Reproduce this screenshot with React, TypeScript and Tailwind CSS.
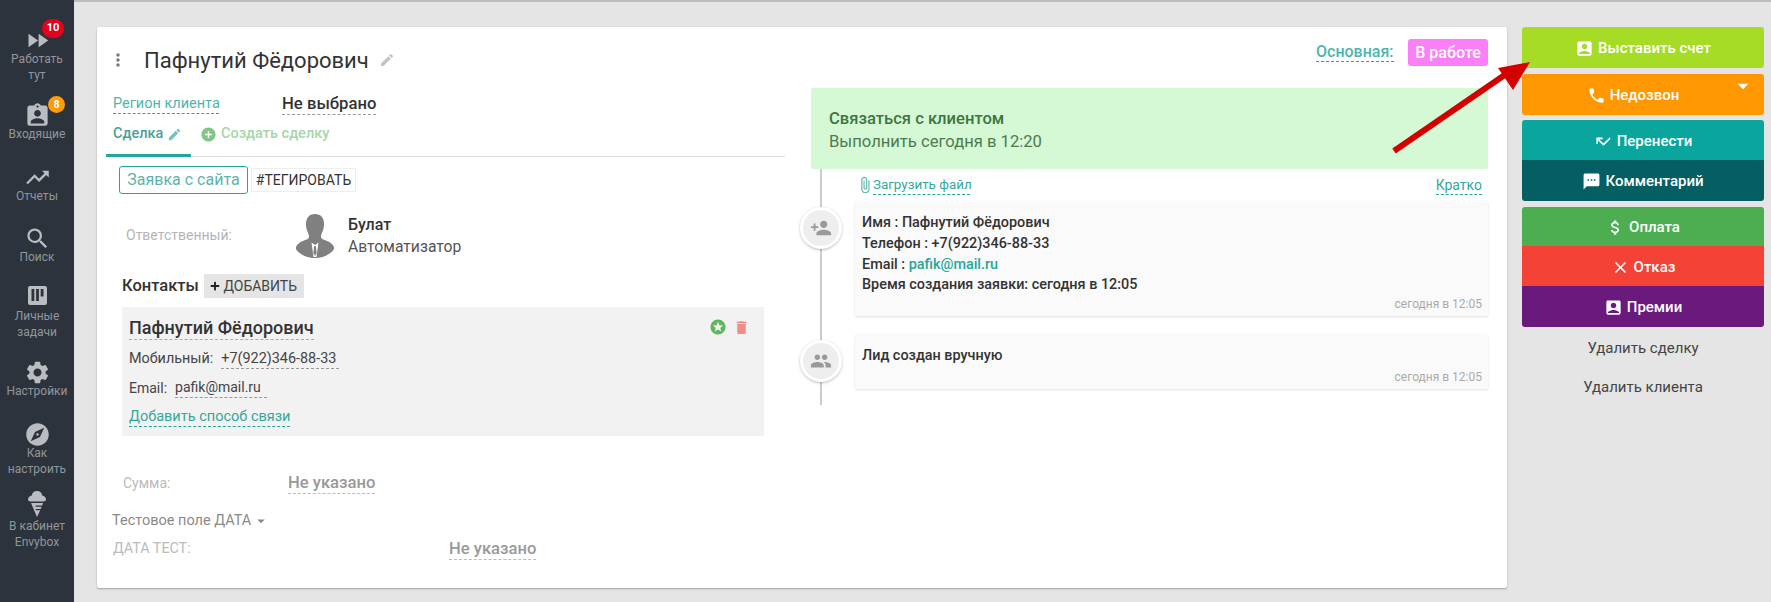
import type { ReactNode } from 'react';
import { FaPlus } from 'react-icons/fa';
import {
  MdFastForward,
  MdAssignmentInd,
  MdTrendingUp,
  MdSearch,
  MdSettings,
  MdExplore,
  MdMoreVert,
  MdEdit,
  MdAddCircle,
  MdStars,
  MdDelete,
  MdArrowDropDown,
  MdAttachFile,
  MdPersonAdd,
  MdPeople,
  MdAccountBox,
  MdPhone,
  MdCallMissed,
  MdSms,
  MdAttachMoney,
  MdClose,
} from 'react-icons/md';

function IceCream() {
  return (
    <svg width="18" height="26" viewBox="0 0 18 26" fill="#b9bdc2">
      <path d="M9 0c3 0 5 2 5.200 4.500C16.500 5 18 6.500 18 8.200 18 9.500 16.800 10.500 15.500 10.500h-13C1.200 10.500 0 9.500 0 8.200 0 6.500 1.500 5 3.800 4.500 4 2 6 0 9 0z" />
      <path d="M3 12h12l-.8 2.400H7.500v1.400h6l-.7 2.200H7.800v1.300h4.400L9 26 3 12z" />
    </svg>
  );
}

// board icon for "Личные задачи"
function Board() {
  return (
    <svg width="19" height="19" viewBox="0 0 19 19" fill="#b9bdc2">
      <path d="M2 0h15a2 2 0 0 1 2 2v15a2 2 0 0 1-2 2H2a2 2 0 0 1-2-2V2a2 2 0 0 1 2-2z" />
      <rect x="3.500" y="3" width="2.800" height="12" fill="#2c333c" />
      <rect x="8.100" y="3" width="2.800" height="12" fill="#2c333c" />
      <rect x="12.700" y="3" width="2.800" height="7.500" fill="#2c333c" />
    </svg>
  );
}

function Avatar() {
  return (
    <svg width="38" height="44" viewBox="0 0 38 44" fill="#808080">
      <path d="M19 0c6 0 9 4 9 10 0 3-.6 5.500-1.500 7.500-.8 2-1.500 3.500-1.500 5 0 1.500 1 2.500 3 3.300 4 1.500 8 3 10 7.200 .7 1.500 -.5 3-2 4.500C32 41.500 26 44 19 44S6 41.500 1.900 37.500C.4 36 -.7 34.500 0 33c2-4.200 6-5.700 10-7.200 2-.8 3-1.800 3-3.300 0-1.500-.7-3-1.500-5C10.600 15.500 10 13 10 10 10 4 13 0 19 0z" />
      <path d="M15.500 28.500L19 31l3.500-2.500L20.500 43h-3z" fill="#fff" />
      <path d="M18.200 32h1.600l.9 7-1.700 3-1.700-3z" />
    </svg>
  );
}

const navItems: { lines: string[]; icon: ReactNode; h: number; gap?: number; badge?: ReactNode }[] = [
  {
    lines: ['Работать', 'тут'],
    icon: <MdFastForward size={27} />,
    h: 75,
    badge: (
      <span className="absolute left-[42px] top-[-10px] flex h-[19px] w-[22px] items-center justify-center rounded-full bg-[#e6001f] text-[11px] font-bold text-white">
        10
      </span>
    ),
  },
  {
    lines: ['Входящие'],
    icon: <MdAssignmentInd size={27} />,
    h: 62,
    badge: (
      <span className="absolute left-[48px] top-[-8px] flex h-[17px] w-[17px] items-center justify-center rounded-full bg-[#ff9c08] text-[10px] font-bold text-white">
        8
      </span>
    ),
  },
  { lines: ['Отчеты'], icon: <MdTrendingUp size={27} />, h: 61 },
  { lines: ['Поиск'], icon: <MdSearch size={27} />, h: 57 },
  { lines: ['Личные', 'задачи'], icon: <Board />, h: 77, gap: 2 },
  { lines: ['Настройки'], icon: <MdSettings size={27} />, h: 62 },
  { lines: ['Как', 'настроить'], icon: <MdExplore size={27} />, h: 70 },
  { lines: ['В кабинет', 'Envybox'], icon: <IceCream />, h: 70, gap: 3 },
];

function Sidebar() {
  return (
    <div className="flex h-full w-[74px] shrink-0 flex-col bg-[#2c333c] pt-[29px] text-[#92969b]">
      {navItems.map((item) => (
        <div key={item.lines[0]} className="relative flex flex-col items-center" style={{ height: item.h }}>
          <div className="relative flex h-[22px] w-[74px] items-center justify-center text-[#b9bdc2]">
            {item.icon}
            {item.badge}
          </div>
          <div className="text-center text-[12px] leading-[16px]" style={{ marginTop: item.gap ?? 0 }}>
            {item.lines.map((l) => (
              <div key={l}>{l}</div>
            ))}
          </div>
        </div>
      ))}
    </div>
  );
}

function Dashed({ children, className = '' }: { children: ReactNode; className?: string }) {
  return <span className={`inline-block border-b border-dashed ${className}`}>{children}</span>;
}

function LeftColumn() {
  return (
    <div className="w-[688px] shrink-0 pl-[9px] pt-[11px]">
      <div className="flex h-[44px] items-center">
        <MdMoreVert size={20} className="ml-[2px] text-[#777]" />
        <span className="ml-[16px] text-[22px] text-[#333]">Пафнутий Фёдорович</span>
        <MdEdit size={16} className="ml-[10px] text-[#c4c4c4]" />
      </div>
      <div className="mt-[10px] flex h-[24px] items-center pl-[7px]">
        <Dashed className="w-[106px] whitespace-nowrap border-[#26a69a] text-[14.5px] leading-[18px] text-[#4db6ac]">Регион клиента</Dashed>
        <Dashed className="ml-[63px] border-[#999] text-[16.7px] leading-[20px] font-medium text-[#333]">Не выбрано</Dashed>
      </div>
      <div className="flex h-[41px] border-b border-[#ddd]">
        <div className="flex h-[41px] w-[85px] items-center border-b-[3px] border-[#26a69a] pb-[2px] pl-[7px] text-[14.5px] font-medium text-[#4b9f98]">
          Сделка
          <MdEdit size={15} className="ml-[4px] text-[#6fc4bc]" />
        </div>
        <div className="ml-[9px] flex items-center pb-[4px] text-[14.5px] font-medium text-[#a5d6a7]">
          <MdAddCircle size={17} className="mr-[4px] text-[#81c784]" />
          Создать сделку
        </div>
      </div>
      <div className="mt-[9px] flex items-center pl-[13px]">
        <span className="flex h-[28px] w-[129px] items-center justify-center rounded-[3px] border border-[#26a69a] text-[16px] text-[#5fb3ab]">
          Заявка с сайта
        </span>
        <span className="ml-[3px] flex h-[24px] w-[105px] items-center justify-center border border-[#eee] text-[14px] text-[#333]">
          #ТЕГИРОВАТЬ
        </span>
      </div>
      <div className="mt-[20px] flex h-[43px] items-center pl-[20px]">
        <span className="w-[170px] text-[14px] text-[#b5b5b5]">Ответственный:</span>
        <Avatar />
        <div className="ml-[14px]">
          <div className="text-[16px] leading-[20px] font-medium text-[#333]">Булат</div>
          <div className="mt-[2px] text-[15.7px] leading-[20px] text-[#555]">Автоматизатор</div>
        </div>
      </div>
      <div className="mt-[17px] flex h-[24px] items-center pl-[16px]">
        <span className="text-[16.5px] font-medium text-[#333]">Контакты</span>
        <span className="ml-[5px] flex h-[24px] w-[100px] items-center justify-center gap-[3px] bg-[#e5e5e5] text-[14px] text-[#444]">
          <FaPlus size={10} className="text-[#222]" />
          ДОБАВИТЬ
        </span>
      </div>
      <div className="relative ml-[16px] mt-[9px] h-[129px] w-[642px] bg-[#f2f2f2] px-[7px] pt-[9px]">
        <div className="absolute right-[14px] top-[11px] flex items-center gap-[6px]">
          <MdStars size={18} className="text-[#5cb85c]" />
          <MdDelete size={17} className="text-[#ef8e88]" />
        </div>
        <Dashed className="border-[#aaa] text-[18px] leading-[23px] font-medium text-[#333]">Пафнутий Фёдорович</Dashed>
        <div className="mt-[8px] flex text-[14.4px] leading-[20px] text-[#444]">
          Мобильный:
          <Dashed className="ml-[8px] w-[118px] border-[#999] leading-[19px]">+7(922)346-88-33</Dashed>
        </div>
        <div className="mt-[9px] flex text-[14px] leading-[20px] text-[#444]">
          Email:
          <Dashed className="ml-[8px] w-[92px] border-[#999] leading-[19px]">pafik@mail.ru</Dashed>
        </div>
        <Dashed className="mt-[9px] border-[#26a69a] text-[14.5px] leading-[19px] text-[#35a79c]">Добавить способ связи</Dashed>
      </div>
      <div className="mt-[35px] flex h-[24px] items-center pl-[17px]">
        <span className="w-[165px] text-[14px] text-[#bbb]">Сумма:</span>
        <Dashed className="border-[#bbb] text-[16.6px] leading-[21px] font-medium text-[#999]">Не указано</Dashed>
      </div>
      <div className="mt-[16px] flex h-[20px] items-center pl-[6px] text-[14.5px] text-[#8a8a8a]">
        Тестовое поле ДАТА
        <MdArrowDropDown size={18} className="ml-[1px]" />
      </div>
      <div className="mt-[6px] flex h-[24px] items-center pl-[7px]">
        <span className="w-[336px] text-[14.3px] text-[#bbb]">ДАТА ТЕСТ:</span>
        <Dashed className="border-[#bbb] text-[16.6px] leading-[21px] font-medium text-[#999]">Не указано</Dashed>
      </div>
    </div>
  );
}

function TimelineCard({ icon, children, time, h }: { icon: ReactNode; children: ReactNode; time: string; h: number }) {
  return (
    <div
      className="relative ml-[44px] bg-[#fafafa] px-[7px] pt-[11px] text-[14.4px] font-medium text-[#333] shadow-[0_1px_2px_rgba(0,0,0,0.12)]"
      style={{ height: h }}
    >
      <div className="absolute left-[-55px] top-[6px] flex h-[42px] w-[42px] items-center justify-center rounded-full border-[3px] border-white bg-[#eee] text-[#999] shadow-[0_1px_3px_rgba(0,0,0,0.25)]">
        {icon}
      </div>
      {children}
      <div className="absolute bottom-[3px] right-[6px] text-[12px] font-normal text-[#aaa]">{time}</div>
    </div>
  );
}

function RightColumn() {
  return (
    <div className="w-[703px] shrink-0 pl-[26px] pt-[12px]">
      <div className="flex h-[27px] items-start justify-end">
        <Dashed className="mt-[3px] w-[78px] border-[#26a69a] text-[16px] leading-[19px] font-medium text-[#4db6ac]">Основная:</Dashed>
        <span className="ml-[14px] flex h-[27px] w-[80px] items-center justify-center rounded-[3px] bg-[#fb7ff6] text-[16px] font-medium text-white">
          В работе
        </span>
      </div>
      <div className="mt-[22px] h-[81px] rounded-[2px] bg-[#d4f9d4] pl-[18px] pt-[19px]">
        <div className="text-[16.6px] leading-[24px] font-medium text-[#3f7540]">Связаться с клиентом</div>
        <div className="text-[16.6px] leading-[21px] text-[#4f7a50]">Выполнить сегодня в 12:20</div>
      </div>
      <div className="relative pb-[16px]">
        <div className="absolute bottom-0 left-[9px] top-0 w-[2px] bg-[#ccc]" />
        <div className="ml-[44px] flex h-[32px] items-center justify-between pl-[1px] pr-[6px] text-[14px] text-[#35a79c]">
          <span className="flex items-center">
            <MdAttachFile size={18} className="mr-[-1px] text-[#5fb3ab]" />
            <Dashed className="mt-[1px] w-[97px] whitespace-nowrap border-[#26a69a] text-[13.4px] leading-[18px]">Загрузить файл</Dashed>
          </span>
          <Dashed className="mt-[1px] border-[#26a69a] leading-[18px]">Кратко</Dashed>
        </div>
        <TimelineCard icon={<MdPersonAdd size={22} />} time="сегодня в 12:05" h={115}>
          <div className="leading-[21px]">Имя : Пафнутий Фёдорович</div>
          <div className="leading-[21px]">Телефон : +7(922)346-88-33</div>
          <div className="leading-[21px]">
            Email : <span className="text-[#26a69a]">pafik@mail.ru</span>
          </div>
          <div className="leading-[19px]">Время создания заявки: сегодня в 12:05</div>
        </TimelineCard>
        <div className="h-[18px]" />
        <TimelineCard icon={<MdPeople size={22} />} time="сегодня в 12:05" h={55}>
          <div className="leading-[21px]">Лид создан вручную</div>
        </TimelineCard>
      </div>
    </div>
  );
}

function Action({ bg, h, icon, label, extra }: { bg: string; h: string; icon: ReactNode; label: string; extra?: ReactNode }) {
  return (
    <div className={`relative flex items-center justify-center pt-[2px] text-[15px] font-medium text-white ${bg} ${h}`}>
      {icon}
      <span className="ml-[4px]">{label}</span>
      {extra}
    </div>
  );
}

function ActionPanel() {
  return (
    <div className="ml-[15px] flex w-[242px] shrink-0 flex-col">
      <Action bg="bg-[#a6dc25] rounded-[3px]" h="h-[41px]" icon={<MdAccountBox size={19} />} label="Выставить счет" />
      <Action
        bg="bg-[#ff9800] rounded-[3px] mt-[6px] pr-[20px]"
        h="h-[41px]"
        icon={<MdPhone size={19} />}
        label="Недозвон"
        extra={<MdArrowDropDown size={26} className="absolute right-[8px] top-[-1px]" />}
      />
      <div className="mt-[5px] overflow-hidden rounded-[3px]">
        <Action bg="bg-[#0aa69d]" h="h-[40px]" icon={<MdCallMissed size={19} />} label="Перенести" />
        <Action bg="bg-[#055f62]" h="h-[41px]" icon={<MdSms size={19} />} label="Комментарий" />
      </div>
      <div className="mt-[6px] overflow-hidden rounded-[3px]">
        <Action bg="bg-[#4cae50]" h="h-[39px]" icon={<MdAttachMoney size={19} />} label="Оплата" />
        <Action bg="bg-[#f44336]" h="h-[40px]" icon={<MdClose size={19} />} label="Отказ" />
        <Action bg="bg-[#6a1a7d]" h="h-[41px]" icon={<MdAccountBox size={19} />} label="Премии" />
      </div>
      <div className="mt-[9px] text-center text-[15px] leading-[24px] text-[#444]">Удалить сделку</div>
      <div className="mt-[15px] text-center text-[15px] leading-[24px] text-[#444]">Удалить клиента</div>
    </div>
  );
}

export default function App() {
  return (
    <div className="relative flex h-[602px] w-[1771px] overflow-hidden bg-[#e5e5e5] font-['Roboto',sans-serif]">
      <Sidebar />
      <div className="flex flex-1 border-t-2 border-[#bdbdbd] pl-[23px] pt-[25px]">
        <div className="flex h-[561px] w-[1410px] shrink-0 rounded-[2px] bg-white shadow-[0_1px_2px_rgba(0,0,0,0.3)]">
          <LeftColumn />
          <RightColumn />
        </div>
        <ActionPanel />
      </div>
      {/* red annotation arrow over the panel */}
      <svg className="pointer-events-none absolute left-[1385px] top-[55px]" width="150" height="100" viewBox="0 0 150 100">
        <line x1="9" y1="96" x2="124" y2="17" stroke="#d40000" strokeWidth="6" />
        <polygon points="145,7 128,35 113,13" fill="#d40000" />
      </svg>
    </div>
  );
}
